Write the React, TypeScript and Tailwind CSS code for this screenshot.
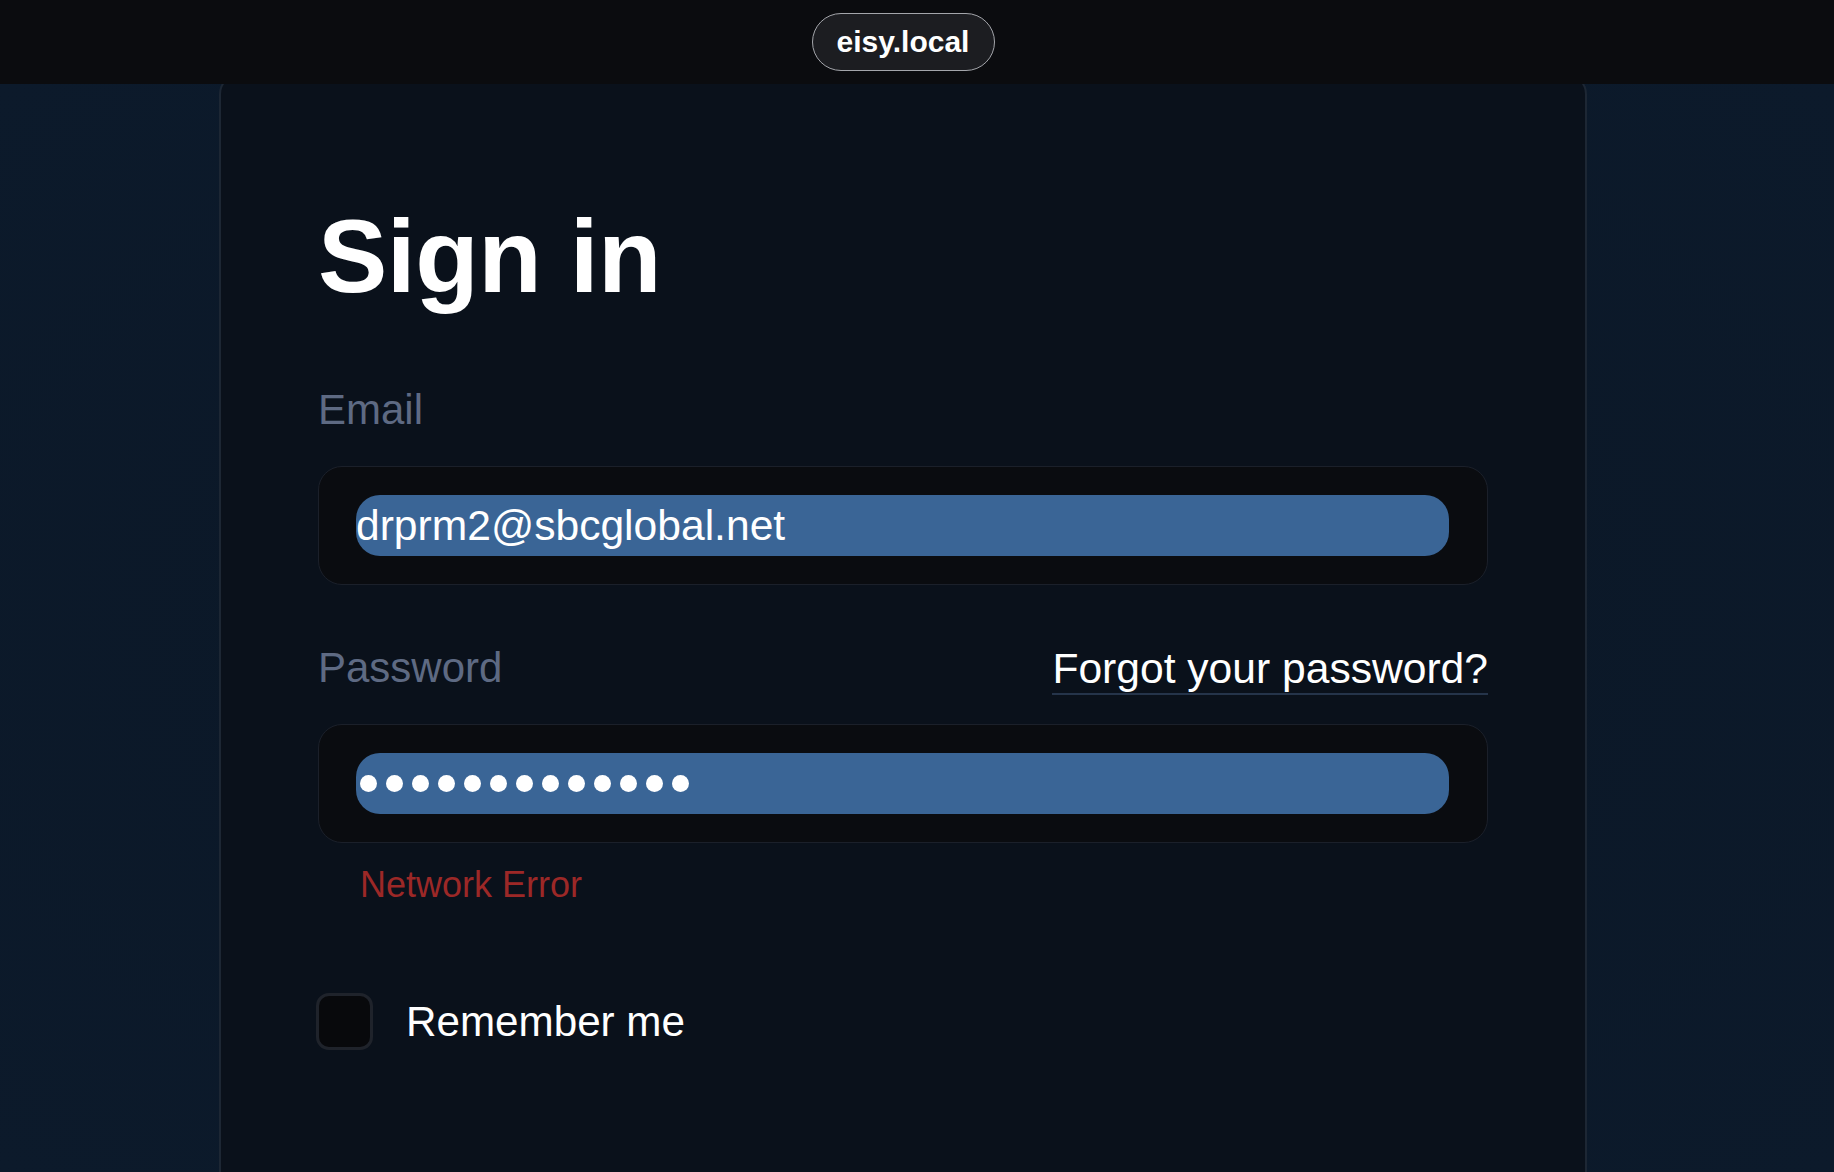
import React from 'react'

const font = { fontFamily: '"Liberation Sans", Arial, sans-serif' }

function PasswordDots({ count }: { count: number }) {
  return (
    <div className="flex items-center gap-[9px]">
      {Array.from({ length: count }).map((_, i) => (
        <div key={i} className="w-[17px] h-[17px] rounded-full bg-white" />
      ))}
    </div>
  )
}

export default function App() {
  return (
    <div
      className="w-[1834px] h-[1172px] overflow-hidden flex flex-col bg-[#0b1625]"
      style={font}
    >
      {/* top address bar */}
      <header className="relative z-10 h-[84px] shrink-0 bg-[#0b0c0f] flex items-center justify-center pr-[28px]">
        <div className="h-[58px] w-[183px] rounded-full border border-[#a4a6ab] bg-[#1c1d21] flex items-center justify-center">
          <span className="text-[30px] font-bold text-white leading-none">eisy.local</span>
        </div>
      </header>

      <main className="flex-1 flex justify-center pr-[28px] bg-[radial-gradient(ellipse_at_center,#0b1726_0%,#0c1a2b_100%)]">
        <section className="-mt-[10px] w-[1368px] rounded-t-[20px] border-2 border-b-0 border-[#1d2734] bg-[#0a111b] px-[97px] pt-[128px] flex flex-col">
          <h1 className="text-[104px] leading-[104px] font-bold text-white tracking-[-0.5px]">Sign in</h1>

          <label className="mt-[78px] text-[42px] leading-[48px] text-[#5e6a83]">Email</label>
          <div className="mt-[32px] h-[119px] rounded-[24px] border border-[#1b202a] bg-[#0a0c10] pl-[37px] pr-[38px] flex items-center">
            <div className="flex-1 h-[61px] rounded-[24px] bg-[#3a6596] flex items-center">
              <span className="text-[42.6px] leading-[61px] text-white">drprm2@sbcglobal.net</span>
            </div>
          </div>

          <div className="mt-[59px] flex items-start justify-between">
            <label className="text-[42px] leading-[48px] text-[#5e6a83]">Password</label>
            <a className="text-[42.6px] leading-[48px] text-white border-b-2 border-[#25344a] pb-[1px]">
              Forgot your password?
            </a>
          </div>
          <div className="mt-[29px] h-[119px] rounded-[24px] border border-[#1b202a] bg-[#0a0c10] pl-[37px] pr-[38px] flex items-center">
            <div className="flex-1 h-[61px] rounded-[24px] bg-[#3a6596] flex items-center pl-[4px]">
              <PasswordDots count={13} />
            </div>
          </div>

          <p className="mt-[22px] pl-[42px] text-[36px] leading-[40px] text-[#9c2827]">Network Error</p>

          <div className="mt-[88px] -ml-[2px] flex items-center gap-[33px]">
            <div className="w-[57px] h-[57px] rounded-[13px] border-[3px] border-[#1f232b] bg-[#08090c]" />
            <span className="text-[42.2px] leading-[48px] text-white">Remember me</span>
          </div>
        </section>
      </main>
    </div>
  )
}
